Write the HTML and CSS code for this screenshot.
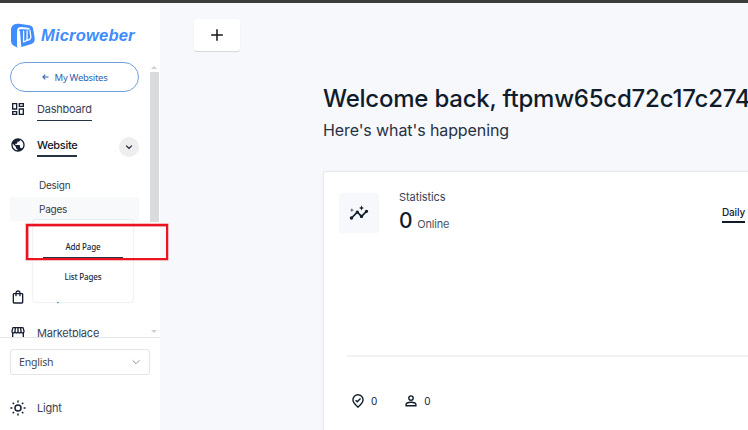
FILE: index.html
```html
<!DOCTYPE html>
<html lang="en">
<head>
<meta charset="utf-8">
<title>Microweber Dashboard</title>
<link rel="stylesheet" href="styles.css">
</head>
<body>
<div class="topbar"></div>
<div class="app">
  <aside class="sidebar">
    <div class="logo">
      <svg class="logo-mark" viewBox="0 0 24 25"><path fill="#3f8cff" d="M0 6Q.3 2.800 3 1.500Q5 .4 8 .8L18.500 2.200Q21.600 2.700 22.200 6L23.700 15.500Q24 19.500 20.500 21L10.300 24L9 8L6.500 8V24.700L2.500 22.500Q0 21 0 18Z"/><path d="M7 24V8Q7 5 10 5L18.500 5.900" fill="none" stroke="#fff" stroke-width="1.900"/><path d="M12.600 7.500V18.800Q16.300 18.300 16.100 15V7.500M16.100 17.300Q20 16.800 19.800 13.500L18.900 7" fill="none" stroke="#fff" stroke-width="1.300"/></svg>
      <span class="logo-text">Microweber</span>
    </div>
    <div class="nav-scroll">
      <nav class="nav">
        <a class="back"><svg viewBox="0 0 8 8"><path d="M7.400 4H1M3.800 1.200L1 4l2.800 2.800" fill="none" stroke="currentColor" stroke-width="1.200"/></svg>My Websites</a>
        <div class="item first"><svg class="ico" viewBox="0 0 24 24"><path d="M19 5v2h-4V5h4M9 5v6H5V5h4m10 8v6h-4v-6h4M9 17v2H5v-2h4M21 3h-8v6h8V3zM11 3H3v10h8V3zm10 8h-8v10h8V11zm-10 4H3v6h8v-6z"/></svg><span class="label underlined">Dashboard</span></div>
        <div class="item"><svg class="ico" viewBox="0 0 24 24"><path d="M12 2C6.480 2 2 6.480 2 12s4.480 10 10 10 10-4.480 10-10S17.520 2 12 2zm-1 17.930c-3.950-.49-7-3.850-7-7.930 0-.62.080-1.210.210-1.790L9 15v1c0 1.100.9 2 2 2v1.930zm6.900-2.540c-.26-.81-1-1.390-1.900-1.390h-1v-3c0-.55-.45-1-1-1H8v-2h2c.55 0 1-.45 1-1V7h2c1.100 0 2-.9 2-2v-.41c2.930 1.190 5 4.060 5 7.410 0 2.080-.8 3.970-2.100 5.390z"/></svg><span class="label underlined strong">Website</span>
          <span class="toggle"><svg viewBox="0 0 8 8"><path d="M1.200 2.600L4 5.400l2.800-2.800" fill="none" stroke="currentColor" stroke-width="1.300"/></svg></span></div>
        <div class="subnav">
          <div class="sub">Design</div>
          <div class="sub active">Pages
            <div class="menu"><div class="menu-item current">Add Page</div><div class="menu-item">List Pages</div></div>
          </div>
        </div>
        <div class="item shop"><svg class="ico" viewBox="0 0 24 24"><path d="M18 6h-2c0-2.210-1.790-4-4-4S8 3.790 8 6H6c-1.100 0-2 .9-2 2v12c0 1.100.9 2 2 2h12c1.100 0 2-.9 2-2V8c0-1.100-.9-2-2-2zm-6-2c1.100 0 2 .9 2 2h-4c0-1.100.9-2 2-2zm6 16H6V8h2v2c0 .55.45 1 1 1s1-.45 1-1V8h4v2c0 .55.45 1 1 1s1-.45 1-1V8h2v12z"/></svg><span class="label">Shop</span></div>
        <div class="item"><svg class="ico" viewBox="0 0 24 24"><path d="M21.900 8.890l-1.050-4.370c-.22-.9-1-1.520-1.910-1.520H5.050c-.9 0-1.690.63-1.900 1.520L2.100 8.890c-.24 1.020-.02 2.060.62 2.880.08.110.190.190.280.290V19c0 1.100.9 2 2 2h14c1.100 0 2-.9 2-2v-6.940c.09-.09.2-.18.280-.28.64-.82.870-1.870.620-2.890zM18.910 4.990l1.050 4.370c.1.420.010.840-.25 1.170-.14.180-.44.470-.94.470-.61 0-1.140-.49-1.210-1.140L16.980 5l1.930-.01zM13 5h1.960l.54 4.520c.05.390-.07.780-.33 1.070-.22.260-.54.410-.95.410-.67 0-1.220-.59-1.220-1.310V5zM8.490 9.520L9.040 5H11v4.690c0 .72-.55 1.310-1.290 1.310-.34 0-.65-.15-.89-.41-.25-.29-.37-.68-.33-1.070zM4.040 9.360L5.050 5h1.970l-.58 4.860c-.08.65-.6 1.140-1.210 1.140-.49 0-.8-.29-.93-.47-.27-.32-.36-.75-.26-1.170zM5 19v-6.030c.080.010.150.030.230.030.87 0 1.660-.36 2.240-.95.6.6 1.400.95 2.310.95.870 0 1.650-.36 2.230-.93.59.57 1.390.93 2.290.93.840 0 1.640-.35 2.240-.95.58.59 1.370.95 2.240.95.080 0 .15-.02.230-.03V19H5z"/></svg><span class="label">Marketplace</span></div>
      </nav>
      <div class="scrollbar"><i class="up"></i><i class="thumb"></i><i class="down"></i></div>
    </div>
    <div class="side-foot">
      <div class="select"><span>English</span><svg viewBox="0 0 8 8"><path d="M.6 2.300L4 5.700l3.400-3.400" fill="none" stroke="#8a919c" stroke-width="1"/></svg></div>
      <div class="item light"><svg class="ico" viewBox="0 0 16 16"><g fill="none" stroke="#172033" stroke-width="1.500"><circle cx="8" cy="8" r="3"/><path d="M8 .4v2M8 13.600v2M.4 8h2M13.600 8h2M2.700 2.700l1.300 1.300M12 12l1.300 1.300M2.700 13.300l1.300-1.300M12 4l1.300-1.300"/></g></svg><span class="label">Light</span></div>
    </div>
  </aside>
  <main class="main">
    <button class="add"><svg viewBox="0 0 12 12"><path d="M6 .2v11.600M.2 6h11.600" stroke="#171717" stroke-width="1.500"/></svg></button>
    <div class="content">
      <h1>Welcome back, ftpmw65cd72c17c274</h1>
      <p class="lead">Here's what's happening</p>
      <section class="card">
        <header class="stats">
          <div class="stat-icon"><svg viewBox="0 0 24 24"><path d="M21 8c-1.450 0-2.260 1.440-1.930 2.510l-3.550 3.560c-.3-.09-.74-.09-1.040 0l-2.550-2.550C12.270 10.450 11.460 9 10 9c-1.450 0-2.270 1.440-1.930 2.520l-4.560 4.550C2.440 15.740 1 16.550 1 18c0 1.100.9 2 2 2 1.450 0 2.260-1.440 1.930-2.510l4.550-4.560c.3.090.74.090 1.040 0l2.550 2.550C12.730 16.550 13.540 18 15 18c1.450 0 2.270-1.440 1.930-2.520l3.560-3.550C21.560 12.260 23 11.450 23 10c0-1.100-.9-2-2-2zM15 9l.94-2.070L18 6l-2.060-.93L15 3l-.92 2.070L12 6l2.080.93zM3.500 11L4 9l2-.5L4 8l-.5-2L3 8l-2 .5L3 9z"/></svg></div>
          <div class="stat-text"><div class="stat-title">Statistics</div><div class="stat-value"><b>0</b><span>Online</span></div></div>
          <span class="period">Daily</span>
        </header>
        <div class="chart"></div>
        <footer class="counts">
          <span class="count"><svg viewBox="0 0 14 14"><path d="M7 13.200C4.200 10.600 1.900 8.500 1.900 5.900a5.100 5.100 0 0 1 10.200 0c0 2.600-2.300 4.700-5.100 7.300zM4.600 6.200l1.700 1.600 3.200-3.200" fill="none" stroke="#111c2b" stroke-width="1.400"/></svg>0</span>
          <span class="count"><svg viewBox="0 0 14 14"><g fill="none" stroke="#111c2b" stroke-width="1.400"><circle cx="7" cy="4.100" r="2.200"/><path d="M2.100 11.700V10.500C2.100 9 5 8.200 7 8.200s4.900.8 4.900 2.300v1.200z"/></g></svg>0</span>
        </footer>
      </section>
    </div>
  </main>
</div>
<div class="highlight"></div>
</body>
</html>
```
FILE: styles.css
```css
* { box-sizing: border-box; }
body { margin: 0; width: 748px; height: 430px; overflow: hidden; background: #f6f8fc; color: #172033; font-family: Inter, "Liberation Sans", sans-serif; }
svg { display: block; flex: none; }
.topbar { height: 3px; background: #3c3c3c; }
.app { display: flex; height: 427px; }
.sidebar { width: 160px; flex: none; display: flex; flex-direction: column; background: #fff; }
.logo { height: 59px; padding: 20px 0 0 11px; display: flex; align-items: flex-start; gap: 6px; color: #3f8cff; }
.logo-mark { width: 24px; height: 25px; }
.logo-text { font: italic 700 16.5px/25px "Liberation Sans", sans-serif; letter-spacing: .2px; }
.nav-scroll { height: 275px; display: flex; overflow: hidden; flex: none; }
.nav { width: 149px; padding-left: 10px; }
.back { width: 129px; height: 30px; border: 1px solid #6fa0dc; border-radius: 15px; display: flex; align-items: center; justify-content: center; gap: 6px; color: #2d63b0; font: 9.5px "Noto Sans", sans-serif; letter-spacing: -.3px; }
.back svg { width: 7px; height: 8px; }
.item { height: 36px; width: 129px; display: flex; align-items: center; gap: 11px; }
.item.first { margin-top: -1px; }
.ico { width: 16px; height: 16px; fill: #172033; }
.label { font-size: 11px; line-height: 20px; color: #384252; letter-spacing: -.22px; }
.underlined { border-bottom: 1px solid #263343; margin-top: 3px; height: 21px; line-height: 19px; }
.strong { color: #111827; font-weight: 500; border-bottom-width: 2px; letter-spacing: -.3px; }
.toggle { width: 20px; height: 20px; margin: 3px 0 0 auto; border-radius: 50%; background: #eee; display: flex; align-items: center; justify-content: center; }
.toggle svg { width: 8px; height: 8px; }
.subnav { padding-top: 10px; }
.sub { width: 129px; height: 24px; padding-left: 29px; font-size: 10px; line-height: 24px; letter-spacing: -.25px; color: #353b45; position: relative; }
.active { background: #f8f9fa; }
.menu { position: absolute; left: 23px; top: 23px; width: 100px; height: 82px; padding: 12px 10px; background: #fff; border-radius: 3px; box-shadow: 0 0 2px #0003; z-index: 1; }
.menu-item { height: 30px; line-height: 30px; text-align: center; font-family: "Noto Sans", sans-serif; font-size: 8px; font-weight: 500; letter-spacing: -.15px; color: #222a35; }
.current { height: 26px; border-bottom: 1px solid #293547; margin-bottom: 4px; }
.shop { margin-top: 58px; }
.scrollbar { width: 10px; display: flex; flex-direction: column; align-items: center; }
.up, .down { border: 3px solid transparent; width: 0; height: 0; }
.up { border-bottom-color: #d0d0d0; border-top: 0; margin: 4px 0 3px; }
.thumb { width: 9px; height: 150px; background: #d9dbdd; }
.down { border-top-color: #d0d0d0; border-bottom: 0; margin: auto 0 4px; }
.side-foot { border-top: 1px solid #e4e5e7; padding: 11px 10px 0; flex: 1; }
.select { width: 140px; height: 26px; padding: 0 9px 0 8px; border: 1px solid #e2e5e9; border-radius: 3px; display: flex; align-items: center; justify-content: space-between; font: 10.5px/22px "Noto Sans", sans-serif; letter-spacing: -.2px; color: #3f4856; }
.select svg { width: 8px; height: 8px; }
.light { margin-top: 15px; }
.main { flex: 1; min-width: 0; overflow: hidden; }
.add { margin: 16px 0 0 34px; width: 46px; height: 32px; padding: 0; border: 0; border-radius: 3px; background: #fff; box-shadow: 0 1px 1px #0002; display: flex; align-items: center; justify-content: center; }
.add svg { width: 12px; height: 12px; }
.content { margin-left: 163px; padding-top: 31px; width: 620px; }
h1 { margin: 0; font-size: 24px; font-weight: 500; line-height: 34px; letter-spacing: -.22px; color: #111c2b; white-space: nowrap; }
.lead { margin: 2px 0 0; font-size: 16px; line-height: 24px; letter-spacing: -.1px; color: #273142; }
.card { margin-top: 29px; height: 280px; background: #fff; border: 1px solid #e8eaee; border-radius: 3px; box-shadow: 0 0 2px #0001; padding: 21px 23px 0 15px; }
.stats { display: flex; }
.stat-icon { width: 40px; height: 40px; border-radius: 3px; background: #f6f8fc; display: flex; align-items: center; justify-content: center; }
.stat-icon svg { width: 20px; height: 20px; fill: #111c2b; }
.stat-text { margin: -5px 0 0 20px; width: 323px; height: 46px; }
.stat-title { font-size: 11px; line-height: 18px; color: #384252; letter-spacing: -.08px; }
.stat-value { display: flex; align-items: baseline; gap: 5px; line-height: 30px; font-size: 11px; letter-spacing: -.2px; color: #4b5361; }
.stat-value b { font-size: 21px; font-weight: 500; color: #111c2b; }
.period { font-size: 10px; font-weight: 500; line-height: 15px; height: 18px; margin-top: 12px; letter-spacing: -.15px; border-bottom: 2px solid #111c2b; }
.chart { height: 123px; margin-left: 8px; border-bottom: 2px solid #f2f2f3; }
.counts { display: flex; gap: 27px; padding: 37px 0 0 12px; }
.count { display: flex; align-items: center; gap: 6px; font-size: 10px; line-height: 14px; }
.count svg { width: 14px; height: 14px; }
.highlight { position: absolute; left: 26px; top: 224px; width: 142px; height: 36px; border: 2px solid #ea1420; box-shadow: 0 0 0 .5px #ea142088, inset 0 1px #ea142066, inset 1px 0 #ea142066; z-index: 2; }
```
